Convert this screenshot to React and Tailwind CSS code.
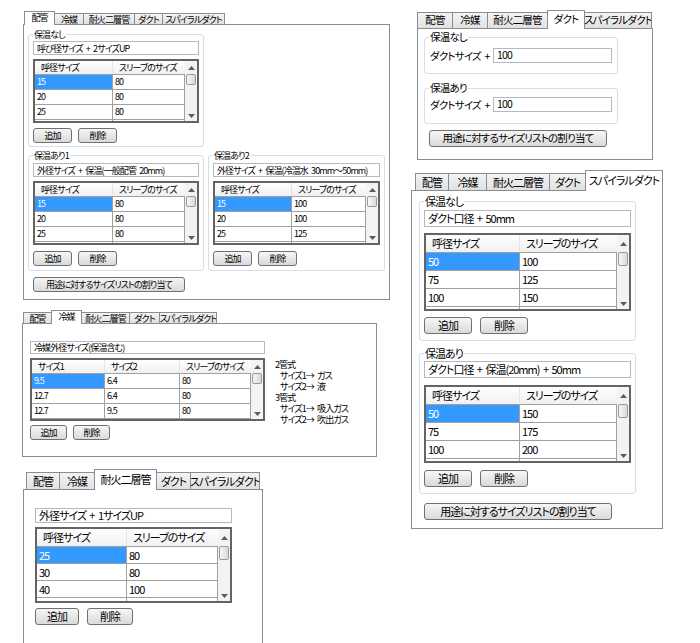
import React from 'react';

const TAB_NAMES = ['配管', '冷媒', '耐火二層管', 'ダクト', 'スパイラルダクト'];

// size presets for the differently scaled screenshots
const SM = { tab: 'h-[12px]', tabOn: 'h-[14px]', head: 'h-[13px]', row: 'h-[15px]', btn: 'h-[15px]', thumb: 'h-[11px]' };
const MD = { tab: 'h-[17px]', tabOn: 'h-[19px]', head: 'h-[16px]', row: 'h-[17px]', btn: 'h-[17px]', thumb: 'h-[13px]' };
const LG = { tab: 'h-[18px]', tabOn: 'h-[21px]', head: 'h-[17px]', row: 'h-[18px]', btn: 'h-[17px]', thumb: 'h-[14px]' };
const LG3 = { tab: 'h-[18px]', tabOn: 'h-[21px]', head: 'h-[17px]', row: 'h-[17px]', btn: 'h-[17px]', thumb: 'h-[14px]' };

const TabStrip = ({ widths, active, sz, offset }) => (
    <div className={`relative z-10 -mb-px flex items-end ${offset}`}>
        {TAB_NAMES.map((name, i) => (
            <div
                key={name}
                className={`${widths[i]} ${i > 0 ? '-ml-px' : ''} flex shrink-0 items-center justify-center overflow-hidden whitespace-nowrap border border-[#898c95] leading-none ${
                    i === active
                        ? `${sz.tabOn} relative z-10 border-b-0 bg-white pb-[2px]`
                        : `${sz.tab} bg-linear-to-b from-[#f4f4f4] to-[#e1e1e1]`
                }`}
            >
                {name}
            </div>
        ))}
    </div>
);

const Arrow = ({ up }) => (
    <svg width="7" height="4" viewBox="0 0 7 4">
        <path d={up ? 'M0 4 L3.5 0 L7 4Z' : 'M0 0 L3.5 4 L7 0Z'} fill="#5a5a5a" />
    </svg>
);

const ScrollBar = ({ sz }) => (
    <div className="flex w-[12px] shrink-0 flex-col bg-[#f3f3f3]">
        <div className={`${sz.head} flex shrink-0 items-center justify-center`}>
            <Arrow up />
        </div>
        <div className={`${sz.thumb} mx-[1px] shrink-0 rounded-[2px] border border-[#999] bg-linear-to-r from-[#f7f7f7] to-[#d9d9d9]`} />
        <div className="flex-1" />
        <div className="flex h-[11px] shrink-0 items-center justify-center">
            <Arrow />
        </div>
    </div>
);

const Grid = ({ cols, rows, sz, h }) => (
    <div className={`flex ${h} overflow-hidden border-2 border-[#646464] bg-white`}>
        <div className="min-w-0 flex-1 overflow-hidden">
            <div className={`flex ${sz.head} bg-linear-to-b from-white to-[#f0f0f0]`}>
                {cols.map((c, i) => (
                    <div key={i} className={`${c.w} flex items-center whitespace-nowrap pl-[6px] ${i < cols.length - 1 ? 'border-r border-[#e6e6e6]' : ''}`}>
                        {c.label}
                    </div>
                ))}
            </div>
            {[...rows, cols.map(() => '')].map((r, ri) => (
                <div key={ri} className={`flex ${sz.row} border-t border-[#a0a0a0]`}>
                    {r.map((v, ci) => (
                        <div
                            key={ci}
                            className={`${cols[ci].w} flex items-center border-r border-[#a0a0a0] pl-[2px] ${ri === 0 && ci === 0 ? 'bg-[#3399ff] text-white' : ''}`}
                        >
                            {v}
                        </div>
                    ))}
                </div>
            ))}
        </div>
        <ScrollBar sz={sz} />
    </div>
);

const Btn = ({ children, h, w, className = '' }) => (
    <button type="button" className={`${h} ${w} ${className} flex items-center justify-center whitespace-nowrap rounded-[3px] border border-[#707070] bg-linear-to-b from-[#f6f6f6] to-[#dadada] leading-none`}>
        {children}
    </button>
);

const TextBox = ({ children, h, w, className = '' }) => (
    <div className={`${h} ${w} ${className} flex items-center overflow-hidden whitespace-nowrap border border-[#b4b8bf] bg-white px-[3px] leading-none`}>
        {children}
    </div>
);

const Group = ({ label, w, className = '', children }) => (
    <fieldset className={`${w} ${className} min-w-0 rounded-[3px] border border-[#d5dfe5] px-[4px]`}>
        <legend className="px-[1px] leading-none">{label}</legend>
        {children}
    </fieldset>
);

const sizeCols = (w) => [
    { label: '呼径サイズ', w },
    { label: 'スリーブのサイズ', w: 'flex-1' },
];

const App = () => {
    return (
        <div className="relative h-[643px] w-[700px] overflow-hidden bg-white font-['Noto_Sans_CJK_JP',sans-serif] text-black [font-feature-settings:'palt'] [word-spacing:2px]">

            {/* 配管 */}
            <div className="absolute left-[23px] top-[11px] w-[367px] text-[9px] tracking-[-0.9px]">
                <TabStrip widths={['w-[31px]', 'w-[30px]', 'w-[52px]', 'w-[29px]', 'w-[63px]']} active={0} sz={SM} offset="ml-px" />
                <div className="h-[276px] border border-[#898c95] bg-white pl-[4px] pt-[5px]">
                    <Group label="保温なし" w="w-[176px]" className="pb-[3px]">
                        <TextBox h="h-[14px]" w="w-full" className="mt-[2px]">呼び径サイズ + 2サイズUP</TextBox>
                        <div className="mt-[4px]">
                            <Grid cols={sizeCols('w-[78px]')} rows={[['15', '80'], ['20', '80'], ['25', '80']]} sz={SM} h="h-[64px]" />
                        </div>
                        <div className="mt-[5px] flex gap-[6px]">
                            <Btn h="h-[15px]" w="w-[39px]">追加</Btn>
                            <Btn h="h-[15px]" w="w-[39px]">削除</Btn>
                        </div>
                    </Group>
                    <div className="mt-[4px] flex gap-[4px]">
                        <Group label="保温あり1" w="w-[176px]" className="pb-[4px]">
                            <TextBox h="h-[14px]" w="w-full" className="mt-[3px]">外径サイズ + 保温(一般配管 20mm)</TextBox>
                            <div className="mt-[4px]">
                                <Grid cols={sizeCols('w-[78px]')} rows={[['15', '80'], ['20', '80'], ['25', '80']]} sz={SM} h="h-[64px]" />
                            </div>
                            <div className="mt-[6px] flex gap-[6px]">
                                <Btn h="h-[15px]" w="w-[39px]">追加</Btn>
                                <Btn h="h-[15px]" w="w-[39px]">削除</Btn>
                            </div>
                        </Group>
                        <Group label="保温あり2" w="w-[177px]" className="pb-[4px]">
                            <TextBox h="h-[14px]" w="w-full" className="mt-[3px]">外径サイズ + 保温(冷温水 30mm～50mm)</TextBox>
                            <div className="mt-[4px]">
                                <Grid cols={sizeCols('w-[77px]')} rows={[['15', '100'], ['20', '100'], ['25', '125']]} sz={SM} h="h-[64px]" />
                            </div>
                            <div className="mt-[6px] flex gap-[6px]">
                                <Btn h="h-[15px]" w="w-[39px]">追加</Btn>
                                <Btn h="h-[15px]" w="w-[39px]">削除</Btn>
                            </div>
                        </Group>
                    </div>
                    <Btn h="h-[15px]" w="w-[152px]" className="ml-[5px] mt-[6px]">用途に対するサイズリストの割り当て</Btn>
                </div>
            </div>

            {/* 冷媒 */}
            <div className="absolute left-[22px] top-[310px] w-[355px] text-[9px] tracking-[-0.9px]">
                <TabStrip widths={['w-[29px]', 'w-[31px]', 'w-[49px]', 'w-[31px]', 'w-[58px]']} active={1} sz={SM} offset="ml-px" />
                <div className="h-[134px] border border-[#898c95] bg-white pl-[7px] pt-[17px]">
                    <TextBox h="h-[13px]" w="w-[235px]">冷媒外径サイズ(保温含む)</TextBox>
                    <div className="mt-[4px] flex h-[63px] items-start gap-[10px]">
                        <div className="w-[235px] shrink-0">
                            <Grid
                                cols={[
                                    { label: 'サイズ1', w: 'w-[73px]' },
                                    { label: 'サイズ2', w: 'w-[75px]' },
                                    { label: 'スリーブのサイズ', w: 'flex-1' },
                                ]}
                                rows={[['9.5', '6.4', '80'], ['12.7', '6.4', '80'], ['12.7', '9.5', '80']]}
                                sz={SM}
                                h="h-[63px]"
                            />
                        </div>
                        <div className="pt-[1px] leading-[11px]">
                            <div>2管式</div>
                            <div className="pl-[5px]">サイズ1→ ガス</div>
                            <div className="pl-[5px]">サイズ2→ 液</div>
                            <div>3管式</div>
                            <div className="pl-[5px]">サイズ1→ 吸入ガス</div>
                            <div className="pl-[5px]">サイズ2→ 吹出ガス</div>
                        </div>
                    </div>
                    <div className="mt-[4px] flex gap-[6px]">
                        <Btn h="h-[15px]" w="w-[37px]">追加</Btn>
                        <Btn h="h-[15px]" w="w-[37px]">削除</Btn>
                    </div>
                </div>
            </div>

            {/* 耐火二層管 */}
            <div className="absolute left-[23px] top-[469px] w-[240px] text-[11px] tracking-[-1px]">
                <TabStrip widths={['w-[34px]', 'w-[36px]', 'w-[63px]', 'w-[35px]', 'w-[70px]']} active={2} sz={LG3} offset="ml-[3px]" />
                <div className="h-[170px] border border-[#898c95] bg-white pl-[11px] pt-[18px]">
                    <TextBox h="h-[15px]" w="w-[197px]">外径サイズ + 1サイズUP</TextBox>
                    <div className="mt-[4px] w-[197px]">
                        <Grid cols={sizeCols('w-[90px]')} rows={[['25', '80'], ['30', '80'], ['40', '100']]} sz={LG3} h="h-[76px]" />
                    </div>
                    <div className="mt-[5px] flex gap-[8px]">
                        <Btn h="h-[17px]" w="w-[44px]">追加</Btn>
                        <Btn h="h-[17px]" w="w-[46px]">削除</Btn>
                    </div>
                </div>
            </div>

            {/* ダクト */}
            <div className="absolute left-[417px] top-[10px] w-[236px] text-[10.5px] tracking-[-0.8px]">
                <TabStrip widths={['w-[36px]', 'w-[36px]', 'w-[61px]', 'w-[38px]', 'w-[68px]']} active={3} sz={MD} offset="" />
                <div className="h-[132px] border border-[#898c95] bg-white pl-[6px] pt-[3px]">
                    <Group label="保温なし" w="w-[194px]" className="pb-[10px]">
                        <div className="mt-[5px] flex items-center pl-[1px]">
                            <span className="w-[63px] shrink-0 whitespace-nowrap">ダクトサイズ +</span>
                            <TextBox h="h-[15px]" w="w-[119px]">100</TextBox>
                        </div>
                    </Group>
                    <Group label="保温あり" w="w-[194px]" className="mt-[9px] pb-[10px]">
                        <div className="mt-[3px] flex items-center pl-[1px]">
                            <span className="w-[63px] shrink-0 whitespace-nowrap">ダクトサイズ +</span>
                            <TextBox h="h-[15px]" w="w-[119px]">100</TextBox>
                        </div>
                    </Group>
                    <Btn h="h-[17px]" w="w-[178px]" className="ml-[5px] mt-[6px]">用途に対するサイズリストの割り当て</Btn>
                </div>
            </div>

            {/* スパイラルダクト */}
            <div className="absolute left-[411px] top-[170px] w-[252px] text-[11px] tracking-[-1px]">
                <TabStrip widths={['w-[34px]', 'w-[39px]', 'w-[64px]', 'w-[37px]', 'w-[78px]']} active={4} sz={LG} offset="ml-[4px]" />
                <div className="h-[339px] border border-[#898c95] bg-white pl-[7px] pt-[5px]">
                    <Group label="保温なし" w="w-[217px]" className="pb-[6px]">
                        <TextBox h="h-[17px]" w="w-full" className="mt-[3px]">ダクト口径 + 50mm</TextBox>
                        <div className="mt-[6px]">
                            <Grid cols={sizeCols('w-[94px]')} rows={[['50', '100'], ['75', '125'], ['100', '150']]} sz={LG} h="h-[78px]" />
                        </div>
                        <div className="mt-[6px] flex gap-[8px]">
                            <Btn h="h-[17px]" w="w-[48px]">追加</Btn>
                            <Btn h="h-[17px]" w="w-[48px]">削除</Btn>
                        </div>
                    </Group>
                    <Group label="保温あり" w="w-[217px]" className="mt-[7px] pb-[6px]">
                        <TextBox h="h-[17px]" w="w-full" className="mt-[2px]">ダクト口径 + 保温(20mm) + 50mm</TextBox>
                        <div className="mt-[7px]">
                            <Grid cols={sizeCols('w-[94px]')} rows={[['50', '150'], ['75', '175'], ['100', '200']]} sz={LG} h="h-[78px]" />
                        </div>
                        <div className="mt-[7px] flex gap-[8px]">
                            <Btn h="h-[17px]" w="w-[48px]">追加</Btn>
                            <Btn h="h-[17px]" w="w-[48px]">削除</Btn>
                        </div>
                    </Group>
                    <Btn h="h-[17px]" w="w-[188px]" className="ml-[5px] mt-[9px]">用途に対するサイズリストの割り当て</Btn>
                </div>
            </div>
        </div>
    );
};

export default App;
